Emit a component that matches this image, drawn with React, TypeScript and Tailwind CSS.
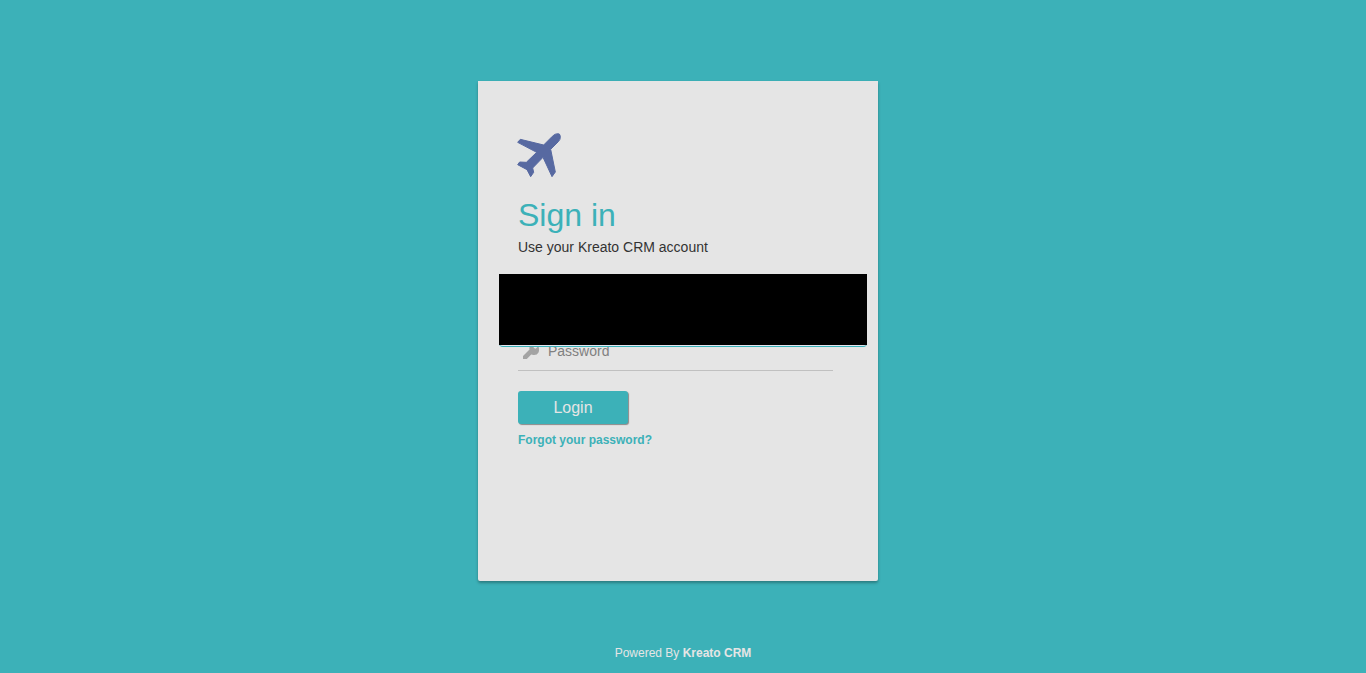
function PlaneLogo() {
  return (
    <svg viewBox="15 15 132 132" className="-ml-px block h-11 w-11 fill-[#5769a1] stroke-[#5769a1]" strokeWidth="3" strokeLinejoin="round" aria-hidden="true">
      <path d="M95 51 L121 25 Q128 17 137 17 L142 18 Q145 22 145 28 Q145 35 139 41 L116 64 L130 132 L120 146 L93 88 L62 120 L65 133 L56 146 L45 125 L17 110 L23 102 L43 103 L74 73 L17 43 L25 34 Z" />
    </svg>
  );
}

function KeyIcon() {
  return (
    <svg viewBox="0 0 16 16" className="h-4 w-4 shrink-0 fill-[#a3a3a3]" aria-hidden="true">
      <path d="M0 13 L6.5 6.5 Q5.8 3 8.5 1 Q10.5 -0.3 13 0.6 L10.3 3.3 L10.9 5.1 L12.7 5.7 L15.4 3 Q16.6 6.5 15.5 9.5 Q14 12.3 10.5 12 L8.2 11.6 L3.8 16 L0 16 Z" />
    </svg>
  );
}

export default function App() {
  return (
    <div className="flex min-h-screen flex-col items-center bg-[#3cb1b8] font-['Liberation_Sans',Arial,sans-serif]">
      <main className="mt-[81px] mr-[10px] min-h-[500px] w-full max-w-[400px] rounded-b-[2px] bg-[#e5e5e5] px-10 pt-[52px] shadow-[0_2px_3px_rgba(0,0,0,0.3)]">
        <PlaneLogo />
        <h1 className="mt-5 text-[32px] leading-9 text-[#3cb1b8]">Sign in</h1>
        <p className="mt-1 text-sm leading-5 text-[#333333]">Use your Kreato CRM account</p>

        <form className="relative mt-[74px]" onSubmit={(e) => e.preventDefault()}>
          <div className="mr-[5px] flex h-10 items-center border-b border-[#c0c0c0] pl-[5px]">
            <KeyIcon />
            <input
              type="password"
              placeholder="Password"
              aria-label="Password"
              className="ml-[9px] h-full min-w-0 flex-1 bg-transparent text-sm text-[#333333] outline-none placeholder:text-[#808080]"
            />
          </div>
          <div className="absolute -top-[57px] -right-[29px] -left-[19px]">
            <div className="h-[73px] rounded-b-[4px] border-b border-[#3cb1b8] bg-[#e5e5f0]">
              <div className="h-[71px] bg-black" />
            </div>
          </div>
          <button
            type="submit"
            className="mt-5 block h-[33px] w-[110px] rounded-[3px] bg-[#3cb1b8] text-base text-[#e5e5e5] shadow-[1px_1px_1px_rgba(0,0,0,0.4)]"
          >
            Login
          </button>
        </form>
        <a href="#forgot" className="mt-2 block w-fit text-xs leading-4 font-bold text-[#3cb1b8]">
          Forgot your password?
        </a>
      </main>
      <footer className="mt-auto pt-8 pb-3 text-xs leading-4 text-[#e5e5e5]">
        Powered By <a href="#kreato" className="font-bold">Kreato CRM</a>
      </footer>
    </div>
  );
}
